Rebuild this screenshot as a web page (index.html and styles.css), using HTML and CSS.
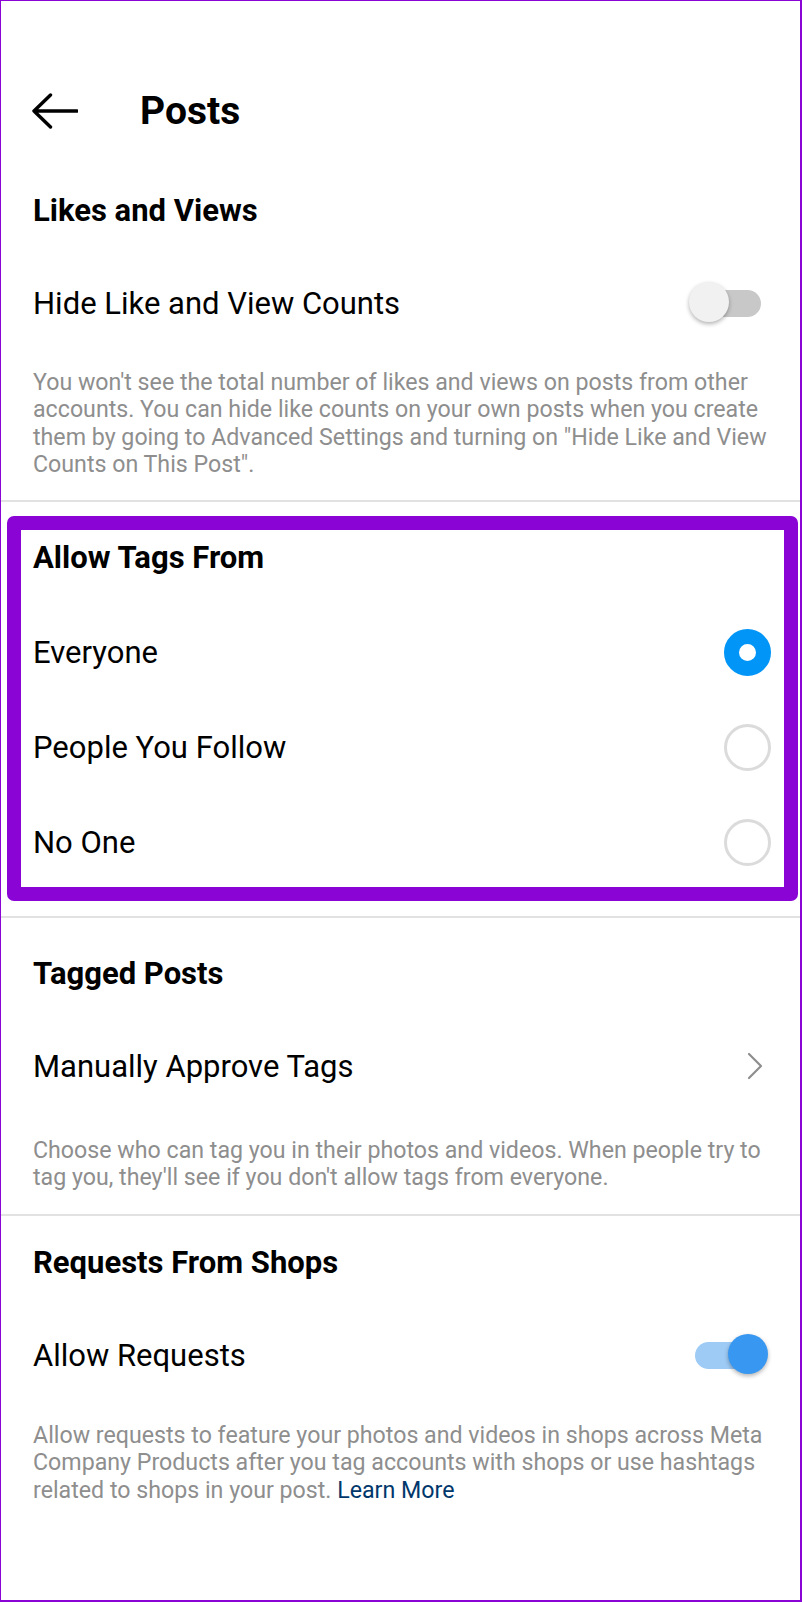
FILE: index.html
```html
<!DOCTYPE html>
<html>
<head>
    <meta charset="UTF-8">
    <title>Posts</title>
    <link rel="stylesheet" href="styles.css">
</head>
<body>
<div class="screen">
    <header class="top-bar">
        <svg class="back" viewBox="0 0 46 36" width="46" height="36">
            <path d="M2 18H45M2 18L18.5 2M2 18L18.5 34" fill="none" stroke="#000" stroke-width="3.4" stroke-linecap="round" stroke-linejoin="round"/>
        </svg>
        <h1 class="title">Posts</h1>
    </header>

    <section class="group group-likes">
        <h2 class="group-title">Likes and Views</h2>
        <div class="row">
            <span>Hide Like and View Counts</span>
            <span class="switch"><span class="knob"></span></span>
        </div>
        <p class="note">You won't see the total number of likes and views on posts from other accounts. You can hide like counts on your own posts when you create them by going to Advanced Settings and turning on "Hide Like and View Counts on This Post".</p>
    </section>
    <div class="divider"></div>

    <!-- highlighted block -->
    <section class="group group-mark">
        <h2 class="group-title">Allow Tags From</h2>
        <ul class="choices">
            <li class="row"><span>Everyone</span><span class="radio on"></span></li>
            <li class="row"><span>People You Follow</span><span class="radio"></span></li>
            <li class="row"><span>No One</span><span class="radio"></span></li>
        </ul>
    </section>
    <div class="divider divider-gap"></div>

    <section class="group group-tagged">
        <h2 class="group-title">Tagged Posts</h2>
        <div class="row">
            <span>Manually Approve Tags</span>
            <svg class="chevron" viewBox="0 0 16 28" width="16" height="28">
                <path d="M2 2L14 14L2 26" fill="none" stroke="#8e8e8e" stroke-width="2.2" stroke-linecap="round" stroke-linejoin="round"/>
            </svg>
        </div>
        <p class="note">Choose who can tag you in their photos and videos. When people try to tag you, they'll see if you don't allow tags from everyone.</p>
    </section>
    <div class="divider"></div>

    <section class="group group-shops">
        <h2 class="group-title">Requests From Shops</h2>
        <div class="row">
            <span>Allow Requests</span>
            <span class="switch on"><span class="knob"></span></span>
        </div>
        <p class="note">Allow requests to feature your photos and videos in shops across Meta Company Products after you tag accounts with shops or use hashtags related to shops in your post. <a class="link" href="javascript:;">Learn More</a></p>
    </section>
</div>
</body>
</html>
```

FILE: styles.css
```css
html,body{
    margin: 0;
    height: 100%;
}
body{
    background: #fff;
    font-family: Roboto, "Noto Sans", sans-serif;
    color: #000;
}
ul,li{
    margin: 0;
    padding: 0;
    list-style: none;
}
.screen{
    width: 802px;
    height: 1602px;
    box-sizing: border-box;
    border: solid #8a05d5;
    border-width: 1px 2px 2px 1px;
    overflow: hidden;
}
.top-bar{
    display: flex;
    align-items: center;
    height: 98px;
    margin-top: 61px;
    padding-left: 31px;
}
.back{
    display: block;
}
.title{
    margin: 0 0 0 62px;
    font-size: 39px;
    font-weight: 700;
}
.group{
    padding: 0 30px 0 32px;
}
.group-title{
    margin: 0;
    height: 94px;
    display: flex;
    align-items: center;
    font-size: 31px;
    font-weight: 700;
}
.row{
    display: flex;
    align-items: center;
    justify-content: space-between;
    height: 92px;
    font-size: 31px;
}
.note{
    margin: 0 -6px 0 0;
    padding: 20px 0 22px;
    font-size: 23.2px;
    line-height: 27.3px;
    color: #8e8e8e;
}
.link{
    color: #00376b;
    text-decoration: none;
}
.divider{
    height: 2px;
    background: #e2e2e2;
}
.divider-gap{
    margin-top: 15px;
}
.group-likes{
    padding-top: 3px;
}
.group-tagged{
    padding-top: 8px;
}
.group-tagged .note{
    padding-top: 25px;
}
.group-shops .note{
    line-height: 27.6px;
}

/* highlighted block */
.group-mark{
    margin: 14px 2px 0 6px;
    border: 14px solid #8a05d5;
    border-radius: 7px;
    padding: 0 13px 21px 12px;
}
.group-mark .group-title{
    height: 54px;
    margin-bottom: 44px;
}
.choices{
    display: flex;
    flex-direction: column;
    gap: 47px;
}
.choices .row{
    height: 48px;
}
.radio{
    width: 47px;
    height: 47px;
    box-sizing: border-box;
    border-radius: 50%;
    border: 3px solid #dbdbdb;
}
.radio.on{
    border: 15.5px solid #0095f6;
}

/* toggle */
.switch{
    position: relative;
    width: 66px;
    height: 27px;
    margin-right: 9px;
    border-radius: 14px;
    background: #c8c8c8;
}
.knob{
    position: absolute;
    top: -8px;
    left: -6px;
    width: 40px;
    height: 40px;
    border-radius: 50%;
    background: #f1f1f1;
    box-shadow: 0 2px 4px rgba(0,0,0,.3);
}
.switch.on{
    background: #9ecbf6;
}
.switch.on .knob{
    left: auto;
    right: -7px;
    background: #3897f0;
}
.chevron{
    display: block;
    margin-right: 7px;
}
```
